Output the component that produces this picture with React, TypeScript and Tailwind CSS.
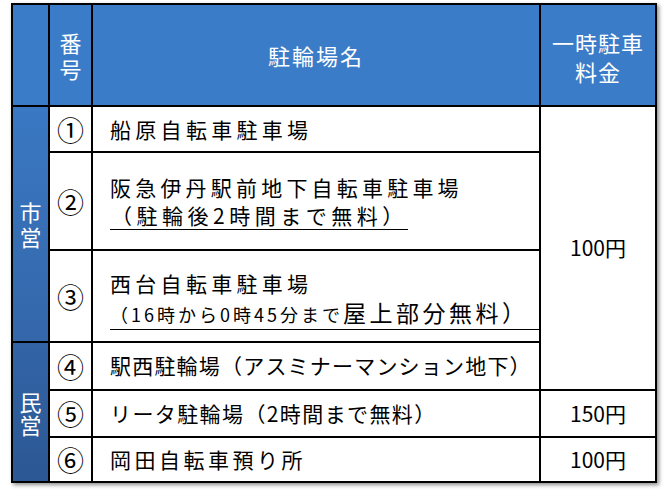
import React from "react";

const F = { fontFamily: '"Noto Sans CJK JP", "Noto Sans", sans-serif' };

export default function App() {
  return (
    <div className="w-[666px] h-[496px] bg-white pl-[11px] pt-[3px]" style={F}>
      <div className="grid w-[646px] grid-cols-[35px_41px_446px_114px] grid-rows-[100px_44px_96px_90px_46px_45px_43px] gap-[2px] bg-black p-[2px] shadow-[2px_2px_4px_rgba(0,0,0,0.45)] text-[21px] text-black">
        {/* header */}
        <div className="col-start-1 row-start-1 bg-[#3b7cc8]" />
        <div className="col-start-2 row-start-1 bg-[#3b7cc8] flex flex-col items-center justify-center text-white text-[22px] leading-[26px]">
          <div>番</div>
          <div>号</div>
        </div>
        <div className="col-start-3 row-start-1 bg-[#3b7cc8] flex items-center justify-center text-white text-[22px] tracking-[2px]">
          駐輪場名
        </div>
        <div className="col-start-4 row-start-1 bg-[#3b7cc8] flex flex-col items-center justify-center text-white text-[22px] leading-[29px] pt-[3px]">
          <div className="tracking-[1px]">一時駐車</div>
          <div className="tracking-[1px]">料金</div>
        </div>

        {/* left group column */}
        <div className="col-start-1 row-start-2 row-span-3 bg-gradient-to-b from-[#3a78c3] to-[#3467aa] flex flex-col items-center justify-center text-white text-[22px] leading-[25px]">
          <div>市</div>
          <div>営</div>
        </div>
        <div className="col-start-1 row-start-5 row-span-3 bg-gradient-to-b from-[#3264a6] to-[#2c5894] flex flex-col items-center justify-center text-white text-[22px] leading-[23px] pt-[2px]">
          <div>民</div>
          <div>営</div>
        </div>

        {/* numbers */}
        {["①", "②", "③", "④", "⑤", "⑥"].map((n, i) => (
          <div
            key={n}
            className={
              "col-start-2 bg-white flex items-center justify-center text-[27px] leading-none " +
              ["row-start-2", "row-start-3", "row-start-4", "row-start-5", "row-start-6", "row-start-7"][i]
            }
          >
            {n}
          </div>
        ))}

        {/* names */}
        <div className="col-start-3 row-start-2 bg-white flex items-center pl-[17px] tracking-[4.3px] pt-[2px] whitespace-nowrap">
          船原自転車駐車場
        </div>
        <div className="col-start-3 row-start-3 bg-white flex flex-col justify-center items-start pl-[17px] leading-[28px] whitespace-nowrap">
          <span className="tracking-[4.2px]">阪急伊丹駅前地下自転車駐車場</span>
          <span className="inline-block border-b border-black tracking-[4.5px] pl-[1px]">（駐輪後2時間まで無料）</span>
        </div>
        <div className="col-start-3 row-start-4 bg-white flex flex-col justify-center pl-[17px] pt-[5px] whitespace-nowrap">
          <span className="tracking-[4.3px] leading-[30px]">西台自転車駐車場</span>
          <span className="block border-b border-black leading-[29px]">
            <span className="text-[18px] tracking-[3px]">（16時から0時45分まで</span>
            <span className="text-[23px] tracking-[3.5px]">屋上部分無料</span>
            <span className="text-[23px]">）</span>
          </span>
        </div>
        <div className="col-start-3 row-start-5 bg-white flex items-center pl-[17px] tracking-[1.2px] whitespace-nowrap">
          駅西駐輪場（アスミナーマンション地下）
        </div>
        <div className="col-start-3 row-start-6 bg-white flex items-center pl-[17px] tracking-[1.4px] whitespace-nowrap">
          リータ駐輪場（2時間まで無料）
        </div>
        <div className="col-start-3 row-start-7 bg-white flex items-center pl-[17px] tracking-[3.5px] whitespace-nowrap">
          岡田自転車預り所
        </div>

        {/* fees */}
        <div className="col-start-4 row-start-2 row-span-4 bg-white flex items-center justify-center">
          100円
        </div>
        <div className="col-start-4 row-start-6 bg-white flex items-center justify-center">
          150円
        </div>
        <div className="col-start-4 row-start-7 bg-white flex items-center justify-center">
          100円
        </div>
      </div>
    </div>
  );
}
